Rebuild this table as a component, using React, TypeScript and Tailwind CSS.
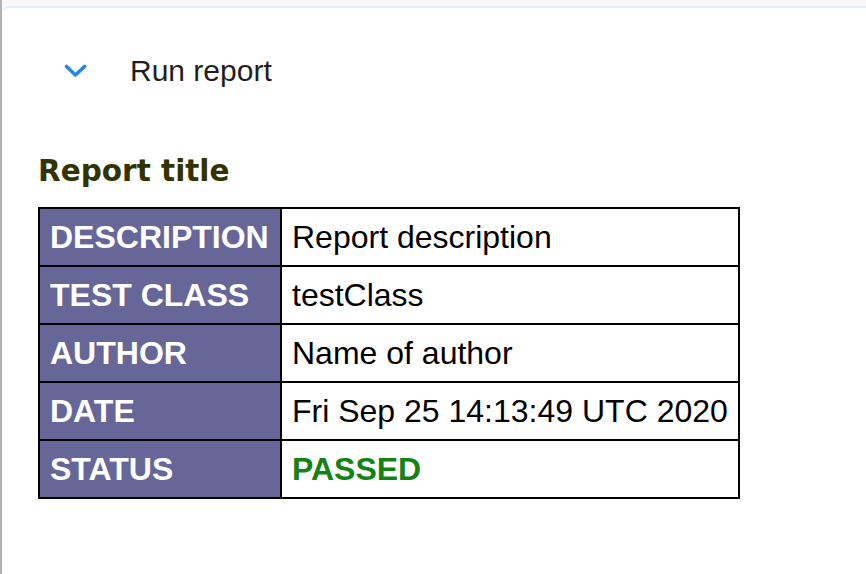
const rows: { label: string; value: string; passed?: boolean }[] = [
  { label: "DESCRIPTION", value: "Report description" },
  { label: "TEST CLASS", value: "testClass" },
  { label: "AUTHOR", value: "Name of author" },
  { label: "DATE", value: "Fri Sep 25 14:13:49 UTC 2020" },
  { label: "STATUS", value: "PASSED", passed: true },
];

const App = () => {
  return (
    <div className="flex min-h-[574px] bg-[#f8f8f8] font-['Liberation_Sans',Arial,sans-serif]">
      <div className="w-[2px] shrink-0 bg-[#b3b3b3]" />
      <div className="mt-[6px] flex-1 rounded-tl-lg border-t-2 border-[#e3effc] bg-white pl-[36px]">
        <div className="mt-[35px] flex h-[56px] items-center pl-[26px]">
          <svg width="23" height="14" viewBox="0 0 23 14" fill="none">
            <path
              d="M2.5 2.5 L11.5 11 L20.5 2.5"
              stroke="#2b86e2"
              strokeWidth="3.6"
              strokeLinecap="round"
              strokeLinejoin="round"
            />
          </svg>
          <span className="ml-[43px] text-[30px] leading-none text-[#1f1f1f]">
            Run report
          </span>
        </div>

        <h1 className="mt-[55px] font-['DejaVu_Sans',Verdana,sans-serif] text-[29.5px] leading-[34px] font-bold text-[#333300]">
          Report title
        </h1>

        <div className="mt-[19px] grid w-[702px] grid-cols-[240px_456px] gap-[2px] bg-black p-[2px]">
          {rows.map((r) => (
            <div key={r.label} className="contents">
              <div className="flex h-[56px] items-center bg-[#666699] pl-[10px] text-[32px] font-bold text-white">
                {r.label}
              </div>
              <div
                className={
                  r.passed
                    ? "flex h-[56px] items-center bg-white pl-[10px] text-[32px] font-bold text-[#148214]"
                    : "flex h-[56px] items-center bg-white pl-[10px] text-[32px] text-black"
                }
              >
                {r.value}
              </div>
            </div>
          ))}
        </div>
      </div>
    </div>
  );
};

export default App;
